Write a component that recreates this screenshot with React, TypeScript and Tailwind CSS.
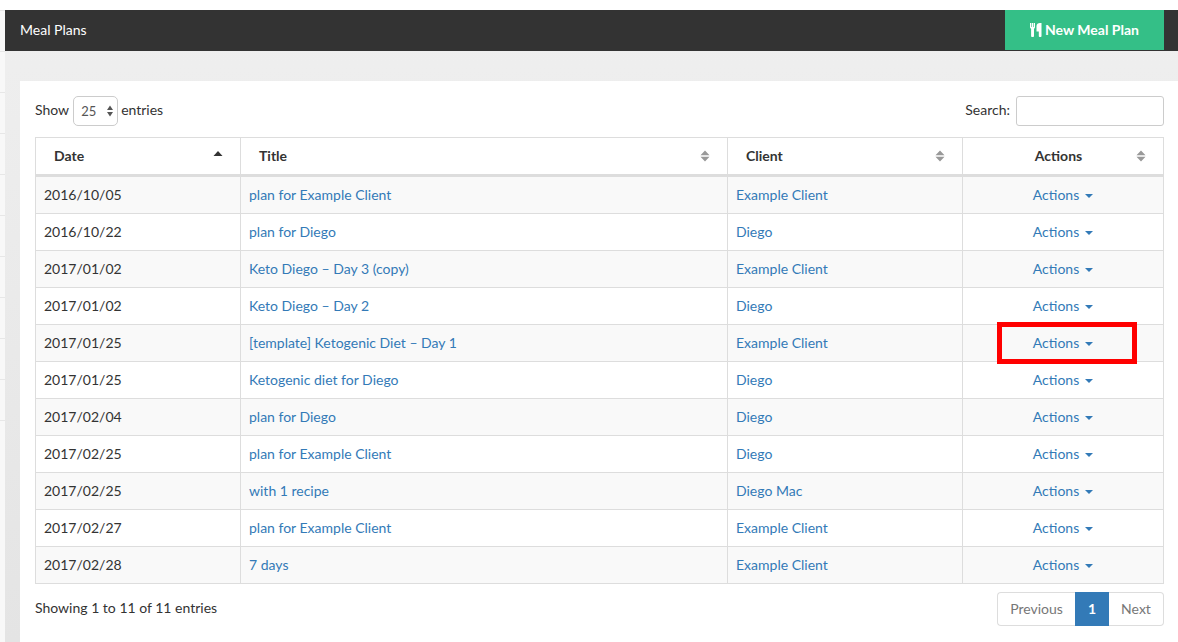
import { useState } from "react"

const plans = [
  { date: "2016/10/05", title: "plan for Example Client", client: "Example Client" },
  { date: "2016/10/22", title: "plan for Diego", client: "Diego" },
  { date: "2017/01/02", title: "Keto Diego – Day 3 (copy)", client: "Example Client" },
  { date: "2017/01/02", title: "Keto Diego – Day 2", client: "Diego" },
  { date: "2017/01/25", title: "[template] Ketogenic Diet – Day 1", client: "Example Client", highlighted: true },
  { date: "2017/01/25", title: "Ketogenic diet for Diego", client: "Diego" },
  { date: "2017/02/04", title: "plan for Diego", client: "Diego" },
  { date: "2017/02/25", title: "plan for Example Client", client: "Diego" },
  { date: "2017/02/25", title: "with 1 recipe", client: "Diego Mac" },
  { date: "2017/02/27", title: "plan for Example Client", client: "Example Client" },
  { date: "2017/02/28", title: "7 days", client: "Example Client" },
]

const columns = ["Date", "Title", "Client", "Actions"]

function CutleryIcon() {
  return (
    <svg width="12" height="14" viewBox="0 0 12 14" fill="currentColor" aria-hidden="true">
      <path d="M0 0h1.200v4h.6V0h1.400v4h.6V0H5v4.600L4 6v7.200c0 .5-.4.800-.9.800H2c-.5 0-.9-.3-.9-.8V6L0 4.600z" />
      <path d="M11.500 0v13.200c0 .5-.4.800-.9.800h-.9c-.5 0-.9-.3-.9-.8V8.500H6.500V3C6.500 1.200 8 0 10 0z" />
    </svg>
  )
}

function SortIcon({ active }: { active: boolean }) {
  if (active) {
    return (
      <svg width="10" height="12" viewBox="0 0 10 12" className="text-[#333]" fill="currentColor" aria-hidden="true">
        <path d="M5 1l4.500 5h-9z" />
      </svg>
    )
  }
  return (
    <svg width="10" height="12" viewBox="0 0 10 12" className="text-[#999]" fill="currentColor" aria-hidden="true">
      <path d="M5 .5L9.500 5.200h-9zM5 11.500L.5 6.800h9z" />
    </svg>
  )
}

export default function App() {
  const [pageSize, setPageSize] = useState("25")
  const [search, setSearch] = useState("")

  const query = search.toLowerCase()
  const rows = plans.filter((p) => `${p.date} ${p.title} ${p.client}`.toLowerCase().includes(query))

  return (
    <div className="flex min-h-screen flex-col bg-white pt-[10px] font-['Lato',sans-serif] text-sm leading-5 text-[#333]">
      <div className="flex flex-1">
        <aside className="w-[5px] shrink-0 bg-[#f8f8f8]">
          {Array.from({ length: 10 }, (_, i) => (
            <div key={i} className="h-[41px] border-t border-[#e7e7e7]" />
          ))}
          <div className="border-t border-[#e7e7e7]" />
        </aside>

        <div className="flex min-w-0 flex-1 flex-col bg-linear-to-b from-[#efefef] to-[#e4e4e4]">
          <header className="flex h-[41px] items-start justify-between bg-[#333] pr-[14px] pl-[15px]">
            <h1 className="py-[10px] text-white">Meal Plans</h1>
            <button type="button" className="flex h-10 w-[159px] items-center justify-center gap-[3px] bg-[#34bf87] font-bold text-white">
              <CutleryIcon />
              New Meal Plan
            </button>
          </header>

          <main className="mt-[30px] ml-[15px] flex-1 bg-white pt-[15px] pr-[14px] pl-[15px]">
            <div className="flex items-center justify-between">
              <div className="flex items-center gap-[3px]">
                <label htmlFor="page-size" className="pr-px pb-[2px]">Show</label>
                <div className="relative">
                  <select
                    id="page-size"
                    value={pageSize}
                    onChange={(e) => setPageSize(e.target.value)}
                    className="block h-[30px] w-[45px] appearance-none rounded-[5px] border border-[#ccc] bg-white pl-[7px] text-[13px] text-[#555]"
                  >
                    <option>10</option>
                    <option>25</option>
                    <option>50</option>
                  </select>
                  <svg width="6" height="12" viewBox="0 0 6 12" className="pointer-events-none absolute top-[9px] right-[5px]" fill="#555" aria-hidden="true">
                    <path d="M3 .5L6 5H0zM3 11.500L0 7h6z" />
                  </svg>
                </div>
                <span className="pb-[2px]">entries</span>
              </div>
              <div className="flex items-center gap-[6px]">
                <label htmlFor="search" className="pb-[2px]">Search:</label>
                <input
                  id="search"
                  type="search"
                  value={search}
                  onChange={(e) => setSearch(e.target.value)}
                  className="h-[30px] w-[148px] rounded-[3px] border border-[#ccc] bg-white px-2 text-[13px]"
                />
              </div>
            </div>

            <table className="mt-[11px] w-full table-fixed border-separate border-spacing-0 border-t border-l border-[#ddd]">
              <colgroup>
                <col className="w-[205px]" />
                <col />
                <col className="w-[235px]" />
                <col className="w-[201px]" />
              </colgroup>
              <thead>
                <tr>
                  {columns.map((name) => (
                    <th key={name} scope="col" className="h-[39px] border-r border-b-[3px] border-[#ddd] pr-[17px] pl-[18px] text-left font-bold">
                      <button type="button" className="flex w-full items-center justify-between">
                        <span className={name === "Actions" ? "flex-1 text-center" : ""}>{name}</span>
                        <SortIcon active={name === "Date"} />
                      </button>
                    </th>
                  ))}
                </tr>
              </thead>
              <tbody>
                {rows.map((plan, idx) => (
                  <tr key={idx} className="odd:bg-[#f9f9f9]">
                    <td className="h-[37px] border-r border-b border-[#ddd] px-2">{plan.date}</td>
                    <td className="border-r border-b border-[#ddd] px-2">
                      <a href="#" className="text-[#337ab7]">{plan.title}</a>
                    </td>
                    <td className="border-r border-b border-[#ddd] px-2">
                      <a href="#" className="text-[#337ab7]">{plan.client}</a>
                    </td>
                    <td className="relative border-r border-b border-[#ddd] px-2">
                      <button type="button" className="mx-auto flex items-center gap-[6px] text-[#337ab7]">
                        Actions
                        <svg width="8" height="6" viewBox="0 0 8 6" fill="currentColor" aria-hidden="true">
                          <path d="M0 2h8L4 6z" />
                        </svg>
                      </button>
                      {plan.highlighted && (
                        <div className="pointer-events-none absolute -top-[3px] right-[26px] -bottom-[3px] left-[34px] z-10 border-[5px] border-[#f00]" />
                      )}
                    </td>
                  </tr>
                ))}
              </tbody>
            </table>

            <div className="mt-2 flex items-start justify-between">
              <p className="mt-[6px]">Showing 1 to {rows.length} of {plans.length} entries</p>
              <nav className="flex h-[34px] text-[#777]" aria-label="Pagination">
                <button type="button" className="w-[78px] rounded-l border border-r-0 border-[#ddd]">Previous</button>
                <button type="button" aria-current="page" className="w-[34px] bg-[#337ab7] font-bold text-white">1</button>
                <button type="button" className="w-[55px] rounded-r border border-l-0 border-[#ddd]">Next</button>
              </nav>
            </div>
          </main>
        </div>
      </div>
    </div>
  )
}
